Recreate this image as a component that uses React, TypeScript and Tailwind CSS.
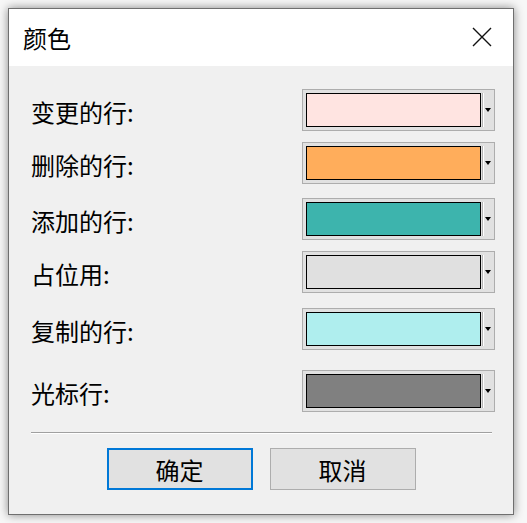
import React from "react";

const rows: { label: string; color: string; mt: string }[] = [
  { label: "变更的行:", color: "#ffe4e1", mt: "mt-0" },
  { label: "删除的行:", color: "#ffad5b", mt: "mt-[11px]" },
  { label: "添加的行:", color: "#3db4ad", mt: "mt-[14px]" },
  { label: "占位用:", color: "#e0e0e0", mt: "mt-[11px]" },
  { label: "复制的行:", color: "#afeeee", mt: "mt-[15px]" },
  { label: "光标行:", color: "#808080", mt: "mt-[20px]" },
];

function ColorBox({ color }: { color: string }) {
  return (
    <div className="flex h-[42px] w-[193px] border border-[#adadad] bg-[#e1e1e1] p-[3px]">
      <div
        className="h-[34px] w-[175px] border border-black"
        style={{ backgroundColor: color }}
      />
      <div className="ml-[1px] h-[34px] w-[1px] bg-[#b4b4b4]" />
      <div className="h-[34px] w-[1px] bg-white" />
      <div className="flex flex-1 items-center justify-center pl-[1px]">
        <svg width="6" height="4" viewBox="0 0 6 4">
          <polygon points="0,0 6,0 3,4" fill="#000" />
        </svg>
      </div>
    </div>
  );
}

export default function App() {
  return (
    <div className="h-[523px] w-[527px] bg-[#f7f7f7] pl-[8px] pt-[8px] font-['Noto_Sans_CJK_SC','Microsoft_YaHei',sans-serif] text-black">
      <div className="flex h-[507px] w-[506px] flex-col border border-[#6f6f6f] bg-[#f0f0f0] shadow-[0_0_9px_rgba(0,0,0,0.45)]">
        <div className="flex h-[57px] items-center justify-between bg-white pl-[14px] pr-[21px]">
          <span className="pt-[1px] text-[24px] leading-none">颜色</span>
          <svg width="20" height="20" viewBox="0 0 20 20" className="mb-[1px]">
            <path d="M1 1 L19 19 M19 1 L1 19" stroke="#111" strokeWidth="1.4" fill="none" />
          </svg>
        </div>
        <div className="flex flex-col pl-[22px] pr-[18px] pt-[23px]">
          {rows.map((r) => (
            <div key={r.label} className={`flex items-center justify-between ${r.mt}`}>
              <span className="pt-[3px] text-[24px] leading-none">{r.label}</span>
              <ColorBox color={r.color} />
            </div>
          ))}
          <div className="mt-[20px] w-[461px]">
            <div className="h-[1px] bg-[#a0a0a0]" />
            <div className="h-[1px] bg-white" />
          </div>
          <div className="mt-[14px] flex w-[461px] justify-center gap-[17px] pr-[1px]">
            <button className="flex h-[42px] w-[146px] items-center justify-center border-2 border-[#0078d7] bg-[#e1e1e1] pt-[1px] text-[24px] leading-none">
              确定
            </button>
            <button className="flex h-[42px] w-[146px] items-center justify-center border border-[#adadad] bg-[#e1e1e1] pt-[1px] text-[24px] leading-none">
              取消
            </button>
          </div>
        </div>
      </div>
    </div>
  );
}
